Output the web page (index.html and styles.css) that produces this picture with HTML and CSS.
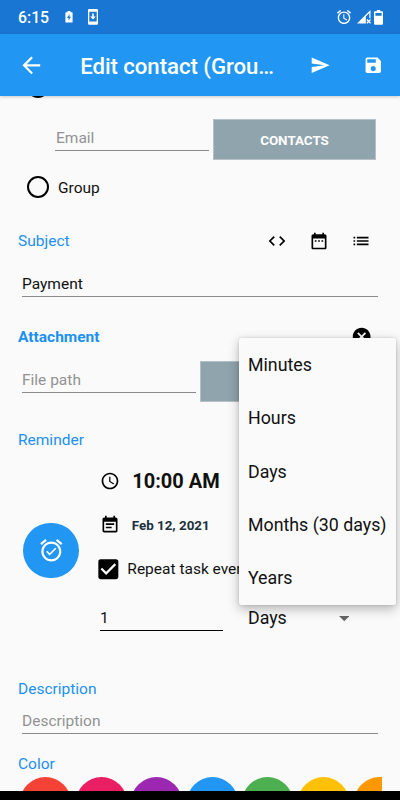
FILE: index.html
```html
<!DOCTYPE html>
<html lang="en">
<head>
<meta charset="utf-8">
<title>Edit contact</title>
<link rel="stylesheet" href="styles.css">
</head>
<body>
<div class="screen">
  <div class="status">
    <span class="time">6:15</span>
    <svg class="s-batt" viewBox="0 0 8 12"><path fill="#fff" fill-rule="evenodd" d="M2.500 0h3v1.200H7q.6 0 .6.600v9.100q0 .6-.6.600H1q-.6 0-.6-.6V1.800q0-.6.600-.6h1.500zM4.500 3L2 6.900h1.600v2.600L6 5.700H4.500z"/></svg>
    <svg class="s-phone" viewBox="0 0 10 16"><path fill="#fff" fill-rule="evenodd" d="M1.200 0h7.600q1.200 0 1.200 1.200v13.300q0 1.200-1.200 1.200H1.200Q0 15.700 0 14.500V1.200Q0 0 1.200 0zM1.300 2.800v9.800h7.400V2.800zM4.200 4.500h1.600v3h2L5 10.600 2.200 7.500h2z"/></svg>
    <span class="grow"></span>
    <svg class="s-alarm" viewBox="2 2 20 20"><path fill="#fff" d="M22 5.720l-4.600-3.860-1.290 1.530 4.600 3.860L22 5.720zM7.880 3.390L6.600 1.860 2 5.710l1.290 1.530 4.590-3.850zM12.500 8H11v6l4.750 2.850.75-1.230-4-2.370V8zM12 4c-4.970 0-9 4.030-9 9s4.020 9 9 9c4.970 0 9-4.030 9-9s-4.030-9-9-9zm0 16c-3.870 0-7-3.130-7-7s3.130-7 7-7 7 3.130 7 7-3.130 7-7 7z"/></svg>
    <svg class="s-signal" viewBox="0 0 14 14"><path fill="#fff" fill-rule="evenodd" d="M13.500 0v8.300H8.800V13.500H0zM12.300 3L8.800 6.500V8.300h3.500z"/><path stroke="#fff" stroke-width="1.300" d="M9.800 9.500l3.700 3.800m0-3.800L9.800 13.300"/></svg>
    <svg class="s-full" viewBox="0 0 9 15"><path fill="#fff" fill-rule="evenodd" d="M2.800 0h3.400v1.300H8q1 0 1 1v11.500q0 1-1 1H1q-1 0-1-1V2.300q0-1 1-1h1.800zM1.400 2.900v2.900h6.200V2.900z"/></svg>
  </div>
  <header class="appbar">
    <svg class="back" viewBox="0 0 24 24"><path fill="#fff" d="M20 11H7.830l5.590-5.590L12 4l-8 8 8 8 1.410-1.410L7.830 13H20v-2z"/></svg>
    <h1>Edit contact (Grou…</h1>
    <svg class="send" viewBox="0 0 24 24"><path fill="#fff" d="M2.010 21L23 12 2.010 3 2 10l15 2-15 2z"/></svg>
    <svg class="save" viewBox="0 0 24 24"><path fill="#fff" d="M17 3H5c-1.110 0-2 .9-2 2v14c0 1.100.89 2 2 2h14c1.100 0 2-.9 2-2V7l-4-4zm-5 16c-1.660 0-3-1.340-3-3s1.340-3 3-3 3 1.340 3 3-1.340 3-3 3zm3-10H5V5h10v4z"/></svg>
  </header>
  <main class="content">
    <div class="radio-row cut"><span class="radio"></span></div>
    <div class="email-row">
      <div class="field hint email">Email</div>
      <div class="btn">CONTACTS</div>
    </div>
    <div class="radio-row group"><span class="radio"></span><span class="t-group">Group</span></div>
    <div class="head subject">
      <span class="label t-subject">Subject</span>
      <svg viewBox="0 0 24 24"><path d="M9.400 16.600L4.800 12l4.600-4.600L8 6l-6 6 6 6 1.400-1.400zm5.200 0l4.600-4.600-4.600-4.600L16 6l6 6-6 6-1.400-1.400z"/></svg>
      <svg viewBox="0 0 24 24"><path d="M9 11H7v2h2v-2zm4 0h-2v2h2v-2zm4 0h-2v2h2v-2zm2-7h-1V2h-2v2H8V2H6v2H5c-1.110 0-1.990.9-1.990 2L3 20c0 1.100.89 2 2 2h14c1.100 0 2-.9 2-2V6c0-1.100-.9-2-2-2zm0 16H5V9h14v11z"/></svg>
      <svg viewBox="0 0 24 24"><path d="M3 13h2v-2H3v2zm0 4h2v-2H3v2zm0-8h2V7H3v2zm4 4h14v-2H7v2zm0 4h14v-2H7v2zM7 7v2h14V7H7z"/></svg>
    </div>
    <div class="field full payment"><span>Payment</span></div>
    <div class="head attach">
      <span class="label bold">Attachment</span>
      <svg class="cancel" viewBox="0 0 24 24"><path d="M12 2C6.470 2 2 6.470 2 12s4.470 10 10 10 10-4.470 10-10S17.530 2 12 2zm5 13.590L15.590 17 12 13.410 8.410 17 7 15.590 10.590 12 7 8.410 8.410 7 12 10.590 15.590 7 17 8.410 13.410 12 17 15.590z"/></svg>
    </div>
    <div class="file-row">
      <div class="field hint file">File path</div>
      <div class="btn"></div>
    </div>
    <div class="head reminder"><span class="label">Reminder</span></div>
    <div class="remind">
      <div class="fab"><svg viewBox="0 0 24 24"><path fill="#fff" d="M22 5.720l-4.600-3.860-1.290 1.530 4.600 3.860L22 5.720zM7.880 3.390L6.600 1.860 2 5.710l1.290 1.530 4.590-3.850zM12 4c-4.970 0-9 4.030-9 9s4.020 9 9 9c4.970 0 9-4.030 9-9s-4.030-9-9-9zm0 16c-3.870 0-7-3.130-7-7s3.130-7 7-7 7 3.130 7 7-3.130 7-7 7zm-1.460-5.470L8.410 12.400l-1.060 1.060 3.180 3.180 6-6-1.060-1.060-4.930 4.950z"/></svg></div>
      <div class="details">
        <div class="line clock"><svg viewBox="0 0 24 24"><path d="M11.990 2C6.470 2 2 6.480 2 12s4.470 10 9.990 10C17.520 22 22 17.520 22 12S17.520 2 11.990 2zM12 20c-4.420 0-8-3.580-8-8s3.580-8 8-8 8 3.580 8 8-3.580 8-8 8zm.5-13H11v6l5.250 3.150.75-1.230-4.500-2.670z"/></svg><span>10:00 AM</span></div>
        <div class="line date"><svg viewBox="0 0 24 24"><path d="M17 10H7v2h10v-2zm2-7h-1V1h-2v2H8V1H6v2H5c-1.110 0-1.990.9-1.990 2L3 19c0 1.100.89 2 2 2h14c1.100 0 2-.9 2-2V5c0-1.100-.9-2-2-2zm0 16H5V8h14v11zm-5-5H7v2h7v-2z"/></svg><span>Feb 12, 2021</span></div>
        <div class="line repeat"><svg viewBox="0 0 24 24"><path d="M19 3H5c-1.110 0-2 .9-2 2v14c0 1.100.89 2 2 2h14c1.110 0 2-.9 2-2V5c0-1.100-.89-2-2-2zm-9 14l-5-5 1.410-1.410L10 14.170l7.590-7.590L19 8l-9 9z"/></svg><span>Repeat task every</span></div>
        <div class="line every">
          <div class="field num">1</div>
          <span class="days">Days</span>
          <svg class="caret" viewBox="0 0 10 5"><path fill="#666" d="M0 0h10L5 5z"/></svg>
        </div>
      </div>
    </div>
    <div class="head desc"><span class="label">Description</span></div>
    <div class="field full hint descfield"><span>Description</span></div>
    <div class="head color"><span class="label">Color</span></div>
    <div class="swatches"><i class="c1"></i><i class="c2"></i><i class="c3"></i><i class="c4"></i><i class="c5"></i><i class="c6"></i><i class="c7"></i></div>
  </main>
  <div class="nav"></div>
  <div class="menu">
    <div>Minutes</div>
    <div>Hours</div>
    <div>Days</div>
    <div>Months (30 days)</div>
    <div>Years</div>
  </div>
</div>
</body>
</html>
```
FILE: styles.css
```css
* { box-sizing: border-box; }
body { margin: 0; font-family: Roboto, "Liberation Sans", sans-serif; font-size: 15.500px; color: #111; background: #fafafa; }
svg { display: block; flex: none; }
.screen { position: relative; width: 400px; height: 800px; overflow: hidden; display: flex; flex-direction: column; background: #fafafa; }
.status { height: 34px; flex: none; background: #1976d2; color: #fff; display: flex; align-items: center; padding: 0 17.500px 0 18px; }
.time { font-size: 15.800px; font-weight: 500; width: 46.500px; }
.s-batt { width: 8px; height: 12px; margin-right: 15.500px; }
.s-phone { width: 10px; height: 16px; }
.grow { flex: 1; }
.s-alarm { width: 14px; height: 14px; margin-right: 6px; }
.s-signal { width: 14px; height: 14px; margin-right: 3px; }
.s-full { width: 9px; height: 15px; }
.appbar { height: 62px; flex: none; background: #2196f3; display: flex; align-items: center; padding: 0 17px 0 18px; z-index: 1; box-shadow: 0 1px 3px rgba(0,0,0,.2); }
.back { width: 26.670px; height: 26.670px; }
h1 { margin: 0 0 0 35.500px; font-size: 22.200px; font-weight: 500; color: #fff; width: 230px; white-space: nowrap; letter-spacing: -.05px; padding-top: 1px; }
.send { width: 20.500px; height: 20.500px; }
.save { width: 20.500px; height: 20.500px; margin-left: auto; }
.content { flex: 1; min-height: 0; overflow: hidden; display: flex; flex-direction: column; }
.content > * { flex: none; }
.nav { height: 9px; flex: none; background: #000; }
.radio-row { display: flex; align-items: center; height: 22px; padding-left: 26.500px; gap: 9px; }
.radio { width: 22.500px; height: 22.500px; border: 2.200px solid #000; border-radius: 50%; }
.t-group { padding-top: 1px; }
.cut { margin-top: -20px; }
.email-row { display: flex; margin-top: 21px; height: 41px; padding-left: 55px; gap: 4px; }
.field { display: flex; align-items: center; border-bottom: 1px solid #8a8a8a; }
.hint { color: #929292; }
.email { width: 154px; height: 32px; padding: 7px 0 0 1px; }
.btn { width: 163px; height: 41px; background: #90a4ae; border: 1px solid #b3c1c7; color: #fff; font-weight: 700; font-size: 13.400px; display: flex; align-items: center; justify-content: center; padding-top: 1px; }
.group { margin-top: 16px; }
.head { display: flex; align-items: center; height: 26px; padding-left: 18px; }
.label { color: #1c90f3; }
.bold { font-weight: 700; }
.subject { margin-top: 30px; padding-right: 29px; }
.subject .label { flex: 1; }
.subject svg { width: 20px; height: 20px; margin-left: 22px; }
.full { margin: 0 22px; }
.payment { margin-top: 18px; height: 25px; }
.attach { margin-top: 27px; padding-right: 28px; justify-content: space-between; }
.cancel { width: 21.300px; height: 21.300px; }
.file-row { display: flex; margin-top: 11px; padding-left: 22px; gap: 4px; }
.file { width: 174px; height: 32px; padding-top: 6px; }
.reminder { margin-top: 25px; }
.remind { display: flex; height: 178px; padding-left: 23.300px; margin-top: 4px; }
.fab { width: 55.600px; height: 55.600px; border-radius: 50%; background: #2196f3; margin-top: 65.600px; display: flex; align-items: center; justify-content: center; }
.fab svg { width: 26.670px; height: 26.670px; }
.details { margin-left: 16.300px; flex: 1; }
.line { display: flex; align-items: center; white-space: nowrap; }
.clock { height: 45px; padding-left: 5px; font-size: 20px; font-weight: 700; margin-top: 1px; }
.clock span { margin-left: 12px; }
.clock svg, .date svg { width: 20px; height: 20px; }
.date { height: 44px; padding-left: 5px; font-size: 13.400px; font-weight: 700; color: #1c313a; }
.date span { margin-left: 11.500px; }
.repeat { height: 44px; }
.repeat svg { width: 26.670px; height: 26.670px; }
.repeat span { margin-left: 5.500px; }
.every { height: 40px; padding: 13px 0 0 4.800px; }
.num { width: 123px; height: 27px; border-color: #000; align-items: flex-start; line-height: 28px; }
.days { margin-left: 25px; font-size: 17.800px; width: 91px; }
.caret { width: 10.500px; height: 5.300px; margin-top: 3px; }
.desc { margin-top: 41px; }
.descfield { margin-top: 7px; height: 25px; }
.color { margin-top: 17px; }
.swatches { display: flex; gap: 4.600px; margin: -.5px 18px 0 20px; overflow: hidden; height: 51px; }
.swatches i { flex: none; width: 51px; height: 51px; border-radius: 50%; }
.c1 { background: #f44336; } .c2 { background: #e91e63; } .c3 { background: #9c27b0; } .c4 { background: #2196f3; }
.c5 { background: #4caf50; } .c6 { background: #ffc107; } .c7 { background: #ff9800; }
.menu { position: absolute; left: 239px; top: 338px; width: 157px; height: 266.500px; background: #fafafa; border-radius: 2px; z-index: 2; box-shadow: 0 4px 12px rgba(0,0,0,.28), 0 0 3px rgba(0,0,0,.14); display: grid; grid-template-rows: repeat(5, 53.300px); font-size: 17.800px; }
.menu div { display: flex; align-items: center; padding-left: 9px; white-space: nowrap; }
```
